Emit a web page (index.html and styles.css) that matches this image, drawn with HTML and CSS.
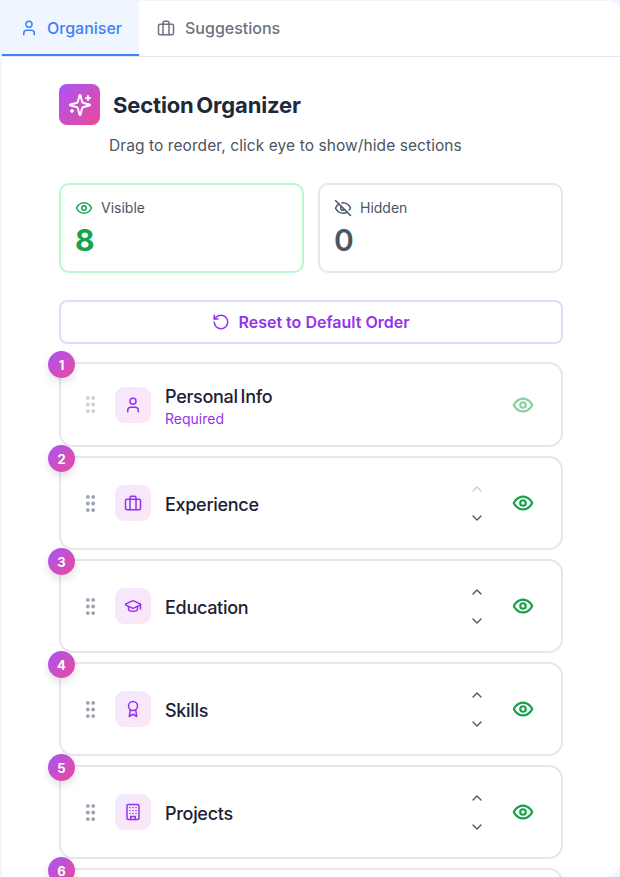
FILE: index.html
```html
<!DOCTYPE html>
<html lang="en">
<head>
  <meta charset="UTF-8">
  <meta name="viewport" content="width=device-width, initial-scale=1.0">
  <title>Section Organizer</title>
  <link rel="stylesheet" href="styles.css">
</head>
<body>
  <svg class="sprite" width="0" height="0">
    <symbol id="i-user" viewBox="0 0 24 24"><path d="M19 21v-2a4 4 0 0 0-4-4H9a4 4 0 0 0-4 4v2"/><circle cx="12" cy="7" r="4"/></symbol>
    <symbol id="i-case" viewBox="0 0 24 24"><rect x="2" y="7" width="20" height="14" rx="2"/><path d="M16 21V5a2 2 0 0 0-2-2h-4a2 2 0 0 0-2 2v16"/></symbol>
    <symbol id="i-eye" viewBox="0 0 24 24"><path d="M2 12s3-7 10-7 10 7 10 7-3 7-10 7-10-7-10-7Z"/><circle cx="12" cy="12" r="3"/></symbol>
    <symbol id="i-eye-off" viewBox="0 0 24 24"><path d="M9.88 9.88a3 3 0 1 0 4.24 4.24"/><path d="M10.73 5.08A10.43 10.43 0 0 1 12 5c7 0 10 7 10 7a13.16 13.16 0 0 1-1.67 2.68"/><path d="M6.61 6.61A13.526 13.526 0 0 0 2 12s3 7 10 7a9.74 9.74 0 0 0 5.39-1.61"/><path d="M2 2l20 20"/></symbol>
    <symbol id="i-up" viewBox="0 0 24 24"><path d="m18 15-6-6-6 6"/></symbol>
    <symbol id="i-down" viewBox="0 0 24 24"><path d="m6 9 6 6 6-6"/></symbol>
    <symbol id="i-cap" viewBox="0 0 24 24"><path d="M21.42 10.922a1 1 0 0 0-.019-1.838L12.83 5.18a2 2 0 0 0-1.66 0L2.6 9.08a1 1 0 0 0 0 1.832l8.57 3.908a2 2 0 0 0 1.66 0z"/><path d="M22 10v6"/><path d="M6 12.5V16a6 3 0 0 0 12 0v-3.5"/></symbol>
    <symbol id="i-award" viewBox="0 0 24 24"><circle cx="12" cy="8" r="6"/><path d="M15.477 12.89 17 22l-5-3-5 3 1.523-9.11"/></symbol>
    <symbol id="i-building" viewBox="0 0 24 24"><rect x="4" y="2" width="16" height="20" rx="2"/><path d="M9 22v-4h6v4"/><path d="M8 6h.01M12 6h.01M16 6h.01M8 10h.01M12 10h.01M16 10h.01M8 14h.01M12 14h.01M16 14h.01"/></symbol>
    <symbol id="i-grip" viewBox="0 0 10 16"><circle cx="2.5" cy="1.8" r="1.8"/><circle cx="7.5" cy="1.8" r="1.8"/><circle cx="2.5" cy="8" r="1.8"/><circle cx="7.5" cy="8" r="1.8"/><circle cx="2.5" cy="14.2" r="1.8"/><circle cx="7.5" cy="14.2" r="1.8"/></symbol>
  </svg>

  <div class="panel">
    <div class="tabs">
      <div class="tab active">
        <svg class="icon icon-18"><use href="#i-user"/></svg>
        <span>Organiser</span>
      </div>
      <div class="tab">
        <svg class="icon icon-18"><use href="#i-case"/></svg>
        <span>Suggestions</span>
      </div>
    </div>

    <div class="content">
      <div class="title-row">
        <div class="logo">
          <svg class="icon icon-24" viewBox="0 0 24 24">
            <path d="M9.937 15.5A2 2 0 0 0 8.5 14.063l-6.135-1.582a.5.5 0 0 1 0-.962L8.5 9.936A2 2 0 0 0 9.937 8.5l1.582-6.135a.5.5 0 0 1 .963 0L14.063 8.5A2 2 0 0 0 15.5 9.937l6.135 1.581a.5.5 0 0 1 0 .964L15.5 14.063a2 2 0 0 0-1.437 1.437l-1.582 6.135a.5.5 0 0 1-.963 0z"/>
            <path d="M20 3v4M22 5h-4M4 17v2M5 18H3"/>
          </svg>
        </div>
        <h1>Section Organizer</h1>
      </div>
      <p class="subtitle">Drag to reorder, click eye to show/hide sections</p>

      <div class="stats">
        <div class="stat stat-visible">
          <div class="stat-label">
            <svg class="icon icon-18"><use href="#i-eye"/></svg>
            <span>Visible</span>
          </div>
          <div class="stat-value">8</div>
        </div>
        <div class="stat stat-hidden">
          <div class="stat-label">
            <svg class="icon icon-18"><use href="#i-eye-off"/></svg>
            <span>Hidden</span>
          </div>
          <div class="stat-value">0</div>
        </div>
      </div>

      <button class="reset-btn">
        <svg class="icon icon-18" viewBox="0 0 24 24"><path d="M3 12a9 9 0 1 0 9-9 9.75 9.75 0 0 0-6.74 2.74L3 8"/><path d="M3 3v5h5"/></svg>
        <span>Reset to Default Order</span>
      </button>

      <div class="section-list">
        <div class="section section-required">
          <span class="badge">1</span>
          <svg class="grip"><use href="#i-grip"/></svg>
          <div class="section-icon"><svg class="icon icon-18"><use href="#i-user"/></svg></div>
          <div class="section-text">
            <div class="section-name">Personal Info</div>
            <div class="section-note">Required</div>
          </div>
          <svg class="icon icon-22 eye"><use href="#i-eye"/></svg>
        </div>

        <div class="section">
          <span class="badge">2</span>
          <svg class="grip"><use href="#i-grip"/></svg>
          <div class="section-icon"><svg class="icon icon-18"><use href="#i-case"/></svg></div>
          <div class="section-text">
            <div class="section-name">Experience</div>
          </div>
          <div class="arrows">
            <svg class="icon icon-16 disabled"><use href="#i-up"/></svg>
            <svg class="icon icon-16"><use href="#i-down"/></svg>
          </div>
          <svg class="icon icon-22 eye"><use href="#i-eye"/></svg>
        </div>

        <div class="section">
          <span class="badge">3</span>
          <svg class="grip"><use href="#i-grip"/></svg>
          <div class="section-icon"><svg class="icon icon-18"><use href="#i-cap"/></svg></div>
          <div class="section-text">
            <div class="section-name">Education</div>
          </div>
          <div class="arrows">
            <svg class="icon icon-16"><use href="#i-up"/></svg>
            <svg class="icon icon-16"><use href="#i-down"/></svg>
          </div>
          <svg class="icon icon-22 eye"><use href="#i-eye"/></svg>
        </div>

        <div class="section">
          <span class="badge">4</span>
          <svg class="grip"><use href="#i-grip"/></svg>
          <div class="section-icon"><svg class="icon icon-18"><use href="#i-award"/></svg></div>
          <div class="section-text">
            <div class="section-name">Skills</div>
          </div>
          <div class="arrows">
            <svg class="icon icon-16"><use href="#i-up"/></svg>
            <svg class="icon icon-16"><use href="#i-down"/></svg>
          </div>
          <svg class="icon icon-22 eye"><use href="#i-eye"/></svg>
        </div>

        <div class="section">
          <span class="badge">5</span>
          <svg class="grip"><use href="#i-grip"/></svg>
          <div class="section-icon"><svg class="icon icon-18"><use href="#i-building"/></svg></div>
          <div class="section-text">
            <div class="section-name">Projects</div>
          </div>
          <div class="arrows">
            <svg class="icon icon-16"><use href="#i-up"/></svg>
            <svg class="icon icon-16"><use href="#i-down"/></svg>
          </div>
          <svg class="icon icon-22 eye"><use href="#i-eye"/></svg>
        </div>

        <div class="section">
          <span class="badge">6</span>
        </div>
      </div>
    </div>
  </div>
</body>
</html>
```

FILE: styles.css
```css
html, body {
  height: 100%;
}
body {
  margin: 0;
  font-family: 'Inter', sans-serif;
  background-color: #eff6ff;
  overflow: hidden;
}
.sprite {
  position: absolute;
}
.panel {
  box-sizing: border-box;
  height: 876px;
  margin: 1px 0 0 2px;
  background: white;
  border-radius: 0 12px 16px 0;
  overflow: hidden;
}
.icon {
  fill: none;
  stroke: currentColor;
  stroke-width: 2;
  stroke-linecap: round;
  stroke-linejoin: round;
  flex-shrink: 0;
}
.icon-16 { width: 16px; height: 16px; }
.icon-18 { width: 18px; height: 18px; }
.icon-22 { width: 22px; height: 22px; }
.icon-24 { width: 24px; height: 24px; }

/* tabs */
.tabs {
  display: flex;
  height: 56px;
  box-sizing: border-box;
  border-bottom: 1px solid #e5e7eb;
}
.tab {
  display: flex;
  align-items: center;
  gap: 10px;
  height: 55px;
  box-sizing: border-box;
  padding: 0 17px 2px 18px;
  font-size: 16px;
  font-weight: 500;
  color: #6b7280;
}
.tab.active {
  gap: 9px;
  color: #3b82f6;
  background-color: #eff6ff;
  border-bottom: 2px solid #3b82f6;
  padding-bottom: 0;
}

/* header */
.content {
  padding: 27px 57px 0;
}
.title-row {
  display: flex;
  align-items: center;
  gap: 13px;
}
.logo {
  width: 41px;
  height: 41px;
  border-radius: 8px;
  background: linear-gradient(135deg, #a855f7, #ec4899);
  color: white;
  display: flex;
  align-items: center;
  justify-content: center;
}
h1 {
  margin: 0;
  font-size: 22px;
  font-weight: 700;
  letter-spacing: -0.15px;
  word-spacing: -2.4px;
  color: #1e293b;
}
.subtitle {
  margin: 10px 0 0 50px;
  font-size: 15.5px;
  line-height: 22px;
  letter-spacing: 0.08px;
  color: #4b5563;
}

/* counters */
.stats {
  display: grid;
  grid-template-columns: 1fr 1fr;
  gap: 14px;
  margin-top: 26px;
}
.stat {
  height: 90px;
  box-sizing: border-box;
  border: 2px solid #e5e7eb;
  border-radius: 10px;
  padding: 13px 14px;
}
.stat-visible {
  border-color: #bbf7d0;
}
.stat-label {
  display: flex;
  align-items: center;
  gap: 8px;
  font-size: 14px;
  line-height: 20px;
  color: #4b5563;
}
.stat-visible .icon { color: #16a34a; }
.stat-value {
  font-size: 30px;
  font-weight: 700;
  line-height: 36px;
  margin-top: 4px;
}
.stat-visible .stat-value { color: #16a34a; }
.stat-hidden .stat-value { color: #4b5563; font-weight: 600; }

.reset-btn {
  width: 100%;
  height: 44px;
  margin-top: 27px;
  background: white;
  border: 2px solid #e9d5ff;
  border-radius: 8px;
  color: #9333ea;
  font-family: inherit;
  font-size: 16px;
  font-weight: 600;
  display: flex;
  align-items: center;
  justify-content: center;
  gap: 8px;
}

/* section rows */
.section-list {
  margin-top: 18px;
  display: flex;
  flex-direction: column;
  gap: 9px;
}
.section {
  position: relative;
  height: 94px;
  flex-shrink: 0;
  box-sizing: border-box;
  border: 2px solid #e5e7eb;
  border-radius: 14px;
  background: white;
  display: flex;
  align-items: center;
  padding: 0 27px 0 24px;
}
.section-required {
  height: 85px;
}
.badge {
  position: absolute;
  top: -13px;
  left: -13px;
  width: 27px;
  height: 27px;
  border-radius: 50%;
  background: linear-gradient(135deg, #a855f7, #ec4899);
  box-shadow: 0 4px 8px rgba(0, 0, 0, 0.12);
  color: white;
  font-size: 13px;
  font-weight: 700;
  display: flex;
  align-items: center;
  justify-content: center;
}
.grip {
  width: 11px;
  height: 17px;
  fill: #9ca3af;
  flex-shrink: 0;
}
.section-required .grip {
  opacity: 0.5;
}
.section-icon {
  width: 36px;
  height: 36px;
  margin-left: 19px;
  border-radius: 9px;
  background: linear-gradient(135deg, #f3e8ff, #fce7f3);
  color: #9333ea;
  display: flex;
  align-items: center;
  justify-content: center;
}
.section-text {
  flex: 1;
  margin-left: 14px;
  padding-top: 4px;
}
.section-name {
  font-size: 18px;
  font-weight: 500;
  line-height: 24px;
  letter-spacing: -0.3px;
  word-spacing: -1.6px;
  color: #1a2233;
}
.section-note {
  font-size: 14px;
  line-height: 20px;
  color: #9333ea;
}
.arrows {
  width: 16px;
  height: 45px;
  margin: 1px 27px 0 0;
  color: #4b5563;
  display: flex;
  flex-direction: column;
  justify-content: space-between;
}
.arrows .disabled {
  opacity: 0.3;
}
.eye {
  color: #16a34a;
  stroke-width: 2.4;
}
.section-required .eye {
  opacity: 0.5;
}
```
